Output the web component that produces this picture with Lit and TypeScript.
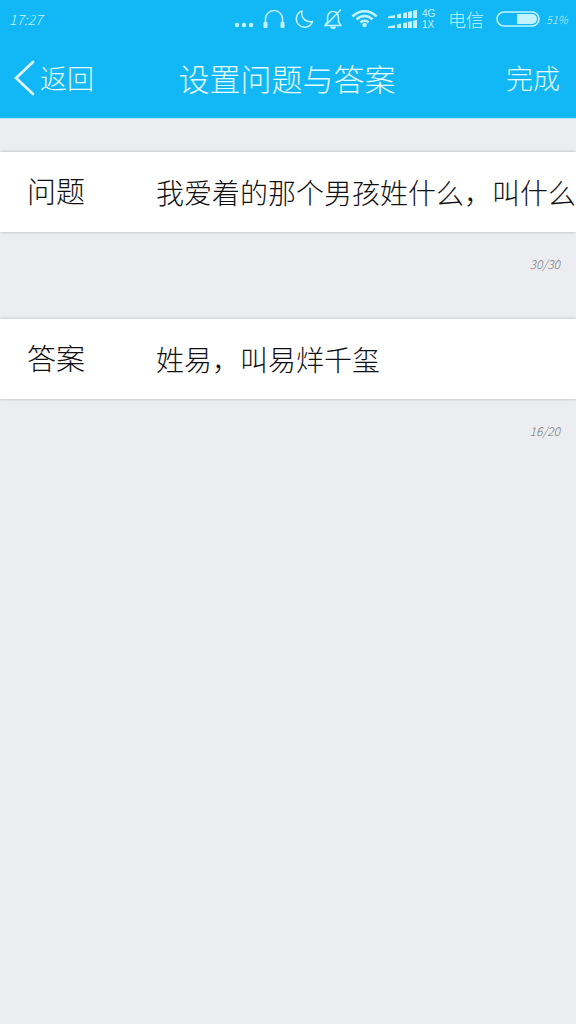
import { LitElement, html, css, svg } from "lit";
import { customElement, property, state } from "lit/decorators.js";

@customElement("status-bar")
class StatusBar extends LitElement {
  static styles = css`
    :host {
      display: flex;
      align-items: center;
      height: 38px;
      padding: 0 8px 0 9px;
      color: #c4f3ff;
      font-size: 16px;
      line-height: 20px;
      white-space: nowrap;
    }
    .time {
      flex: 1;
      font-style: italic;
      font-size: 14px;
    }
    .icons {
      display: block;
      width: 186px;
      height: 38px;
      flex: none;
    }
    .net {
      font: 10px/11px "Liberation Sans", Arial, sans-serif;
      display: grid;
      flex: none;
      width: 16px;
      margin-left: 2px;
    }
    .carrier {
      font-size: 18px;
      margin-left: 10px;
    }
    .battery {
      display: block;
      width: 44px;
      height: 16px;
      margin: 0 6px 0 12px;
      flex: none;
    }
    .percent {
      font-style: italic;
      font-size: 11px;
      width: 22px;
    }
  `;

  private bars(base: number) {
    const spans = [
      [154, 161],
      [163, 167],
      [169, 173],
      [174, 178],
      [179, 183],
    ];
    const top = (x: number) => base - 1.5 - (x - 154) * 0.23;
    return spans.map(
      ([a, b]) => svg`<path d=${`M${a} ${base}V${top(a)}L${b} ${top(b)}V${base}Z`} />`
    );
  }

  render() {
    return html`
      <span class="time">17:27</span>
      <svg class="icons" viewBox="0 0 186 38" aria-hidden="true">
        <g fill="currentColor">
          <circle cx="3" cy="25" r="2.2" />
          <circle cx="10" cy="25" r="2.2" />
          <circle cx="17" cy="25" r="2.2" />
          <rect x="29.500" y="22" width="4" height="6" rx="1" />
          <rect x="46.500" y="22" width="4" height="6" rx="1" />
          <circle cx="130.500" cy="25" r="2.2" />
          <path d="M96 26.500h6a3 2.500 0 0 1-6 0z" />
          ${this.bars(18)}${this.bars(28)}
        </g>
        <g fill="none" stroke="currentColor" stroke-width="1.6" stroke-linecap="round" stroke-linejoin="round">
          <path d="M31.500 24V19a8.500 8.500 0 0 1 17 0V24" />
          <path d="M68 11A8.300 8.300 0 1 0 78.500 21.500C72 23 66.500 18 68 11Z" />
          <path d="M98 11.500C94.500 12.500 93.500 15 93.500 18V22L91 25.500H107L104.500 22V18C104.500 15 103 12 99.500 11.500M106.500 10L91 26" />
        </g>
        <g fill="none" stroke="currentColor" stroke-width="2.6">
          <path d="M118.500 16.500a16.500 16.500 0 0 1 24 0M122.500 19.500a11 11 0 0 1 16 0M126.500 22.500a5.500 5.500 0 0 1 8 0" />
        </g>
      </svg>
      <span class="net"><span>4G</span><span>1X</span></span>
      <span class="carrier">电信</span>
      <svg class="battery" viewBox="0 0 44 16" role="img" aria-label="电量">
        <rect x="1" y="1" width="42" height="14" rx="7" fill="none" stroke="currentColor" stroke-width="1.6" />
        <path d="M21 3h15a5 5 0 0 1 0 10H21z" fill="currentColor" />
      </svg>
      <span class="percent">51%</span>
    `;
  }
}

@customElement("counted-field")
class CountedField extends LitElement {
  @property() label = "";
  @property() value = "";
  @property() count = "";

  static styles = css`
    :host {
      display: block;
    }
    .row {
      display: flex;
      align-items: center;
      height: 80px;
      background: #fff;
      box-shadow: 0 0 3px rgba(0, 0, 0, 0.25);
    }
    .name {
      flex: none;
      box-sizing: border-box;
      width: 156px;
      padding: 0 0 4px 27px;
      font-size: 29px;
      line-height: 40px;
      color: #111;
    }
    .entry {
      flex: 1;
      min-width: 0;
      height: 40px;
      margin: 0;
      padding: 0;
      border: 0;
      outline: 0;
      background: none;
      font: inherit;
      font-size: 28px;
      color: #111;
    }
    .count {
      display: block;
      height: 87px;
      box-sizing: border-box;
      padding: 22px 16px 0 0;
      text-align: right;
      font-size: 12px;
      font-style: italic;
      line-height: 20px;
      color: #777;
    }
  `;

  render() {
    return html`
      <div class="row">
        <label class="name" for="entry">${this.label}</label>
        <input class="entry" id="entry" type="text" .value=${this.value} />
      </div>
      <output class="count" for="entry">${this.count}</output>
    `;
  }
}

@customElement("app-root")
class AppRoot extends LitElement {
  @state() private fields = [
    { label: "问题", value: "我爱着的那个男孩姓什么，叫什么", count: "30/30" },
    { label: "答案", value: "姓易，叫易烊千玺", count: "16/20" },
  ];

  static styles = css`
    :host {
      display: block;
      min-height: 100vh;
      background: #ecedf1;
      font-family: "Noto Sans CJK SC", sans-serif;
      font-weight: 300;
    }
    .top {
      background: #12b7f5;
      color: #e4fbff;
      border-bottom: 1px solid #b5e3f5;
    }
    .nav {
      display: grid;
      grid-template-columns: 1fr auto 1fr;
      align-items: center;
      height: 80px;
      padding: 0 16px 0 14px;
    }
    .action {
      display: flex;
      align-items: center;
      gap: 5px;
      margin: 0;
      padding: 0;
      border: 0;
      background: none;
      color: inherit;
      font: inherit;
      font-size: 27px;
      line-height: 40px;
    }
    .done {
      justify-self: end;
    }
    .chevron {
      display: block;
      width: 21px;
      height: 36px;
    }
    .title {
      margin: 0;
      font-size: 31px;
      font-weight: inherit;
      line-height: 40px;
    }
    .form {
      padding-top: 33px;
    }
  `;

  render() {
    return html`
      <header class="top">
        <status-bar></status-bar>
        <nav class="nav">
          <button class="action" type="button">
            <svg class="chevron" viewBox="0 0 21 36" aria-hidden="true">
              <path d="M19 2L2 18L19 34" fill="none" stroke="currentColor" stroke-width="2.6" stroke-linecap="round" />
            </svg>
            返回
          </button>
          <h1 class="title">设置问题与答案</h1>
          <button class="action done" type="button">完成</button>
        </nav>
      </header>
      <main class="form">
        ${this.fields.map(
          (f) => html`<counted-field .label=${f.label} .value=${f.value} .count=${f.count}></counted-field>`
        )}
      </main>
    `;
  }
}
